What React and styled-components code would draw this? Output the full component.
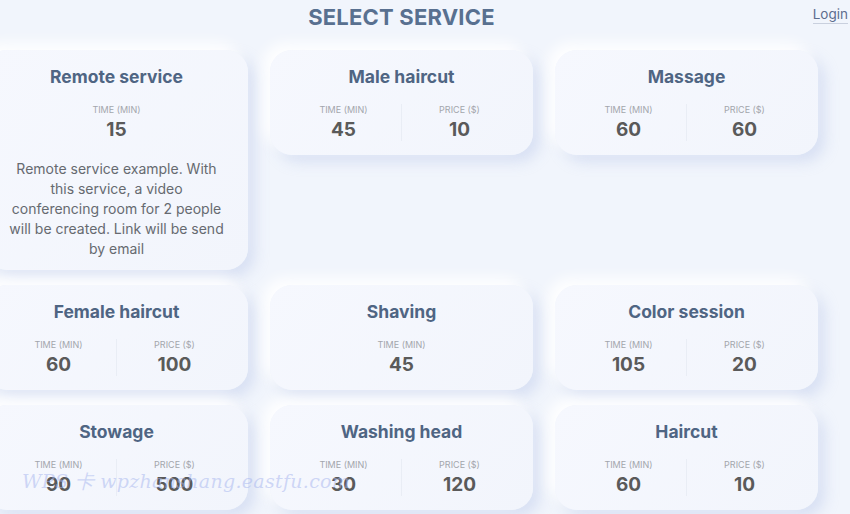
import React from 'react';
import styled, { createGlobalStyle } from 'styled-components';

const services = [
	{
		name: 'Remote service',
		time: 15,
		description: [
			'Remote service example. With',
			'this service, a video',
			'conferencing room for 2 people',
			'will be created. Link will be send',
			'by email',
		],
	},
	{ name: 'Male haircut', time: 45, price: 10 },
	{ name: 'Massage', time: 60, price: 60 },
	{ name: 'Female haircut', time: 60, price: 100 },
	{ name: 'Shaving', time: 45 },
	{ name: 'Color session', time: 105, price: 20 },
	{ name: 'Stowage', time: 90, price: 500 },
	{ name: 'Washing head', time: 30, price: 120 },
	{ name: 'Haircut', time: 60, price: 10 },
];

const GlobalStyle = createGlobalStyle`
	html, body {
		margin: 0;
		padding: 0;
		background: #f1f5fc;
		overflow: hidden;
	}
	body {
		font-family: Inter, "Noto Sans", sans-serif;
	}
`;

export default function App() {
	return (
		<Page>
			<GlobalStyle />
			<Login href="#">Login</Login>
			<Content>
				<Title>SELECT SERVICE</Title>
				<Grid>
					{services.map((s) => (
						<Card key={s.name}>
							<CardTitle>{s.name}</CardTitle>
							<Stats>
								<Stat>
									<StatLabel>Time (min)</StatLabel>
									<StatValue>{s.time}</StatValue>
								</Stat>
								{s.price !== undefined && (
									<Stat divided>
										<StatLabel>Price ($)</StatLabel>
										<StatValue>{s.price}</StatValue>
									</Stat>
								)}
							</Stats>
							{s.description && (
								<Description>
									{s.description.map((line) => (
										<DescLine key={line}>{line}</DescLine>
									))}
								</Description>
							)}
						</Card>
					))}
				</Grid>
			</Content>
			<Watermark>WPS 卡 wpzhanshang.eastfu.com</Watermark>
		</Page>
	);
}

const Page = styled.div`
	position: relative;
	width: 850px;
	height: 514px;
	overflow: hidden;
	background: #f1f5fc;
`;

const Login = styled.a`
	position: absolute;
	top: 6px;
	right: 2px;
	font-size: 13.5px;
	color: #5d6d8e;
	text-decoration: none;
	padding-bottom: 1px;
	border-bottom: 1px solid #c9d0de;
`;

const Content = styled.div`
	width: 833px;
	margin-left: -15px;
	display: flex;
	flex-direction: column;
	align-items: center;
`;

const Title = styled.h1`
	margin: 4px 0 0;
	font-size: 22px;
	line-height: 26px;
	font-weight: 700;
	color: #587090;
	letter-spacing: 0.2px;
`;

const Grid = styled.div`
	margin-top: 20px;
	width: 100%;
	display: grid;
	grid-template-columns: repeat(3, 263px);
	column-gap: 22px;
	row-gap: 15px;
	align-items: start;
`;

const Card = styled.div`
	box-sizing: border-box;
	padding: 17px 16px 14px;
	border-radius: 22px;
	background: linear-gradient(135deg, #f6f8fe 0%, #f2f5fc 100%);
	box-shadow: -7px -7px 14px rgba(255, 255, 255, 0.95), 7px 7px 14px rgba(205, 215, 240, 0.7);
	display: flex;
	flex-direction: column;
	align-items: center;
`;

const CardTitle = styled.h3`
	margin: 0;
	font-size: 17.5px;
	line-height: 20px;
	font-weight: 700;
	color: #4f6583;
`;

const Stats = styled.div`
	margin-top: 17px;
	align-self: stretch;
	display: flex;
	justify-content: center;
`;

const Stat = styled.div`
	flex: 0 1 50%;
	display: flex;
	flex-direction: column;
	align-items: center;
	border-left: ${(p) => (p.divided ? '1px solid #e9edf5' : 'none')};
`;

const StatLabel = styled.span`
	font-size: 9px;
	line-height: 12px;
	text-transform: uppercase;
	color: #a3a6ac;
`;

const StatValue = styled.span`
	margin-top: 3px;
	font-size: 19px;
	line-height: 22px;
	font-weight: 700;
	color: #5a5a5a;
`;

const Description = styled.p`
	margin: 18px 0 -3px;
	display: flex;
	flex-direction: column;
	align-items: center;
	font-size: 14px;
	line-height: 20px;
	text-align: center;
	color: #666a70;
`;

const DescLine = styled.span`
	white-space: nowrap;
`;

const Watermark = styled.div`
	position: absolute;
	left: 22px;
	top: 469px;
	font-family: "DejaVu Serif", serif;
	font-style: italic;
	font-size: 19px;
	letter-spacing: 0.3px;
	color: rgba(165, 180, 238, 0.5);
	pointer-events: none;
	white-space: nowrap;
`;
